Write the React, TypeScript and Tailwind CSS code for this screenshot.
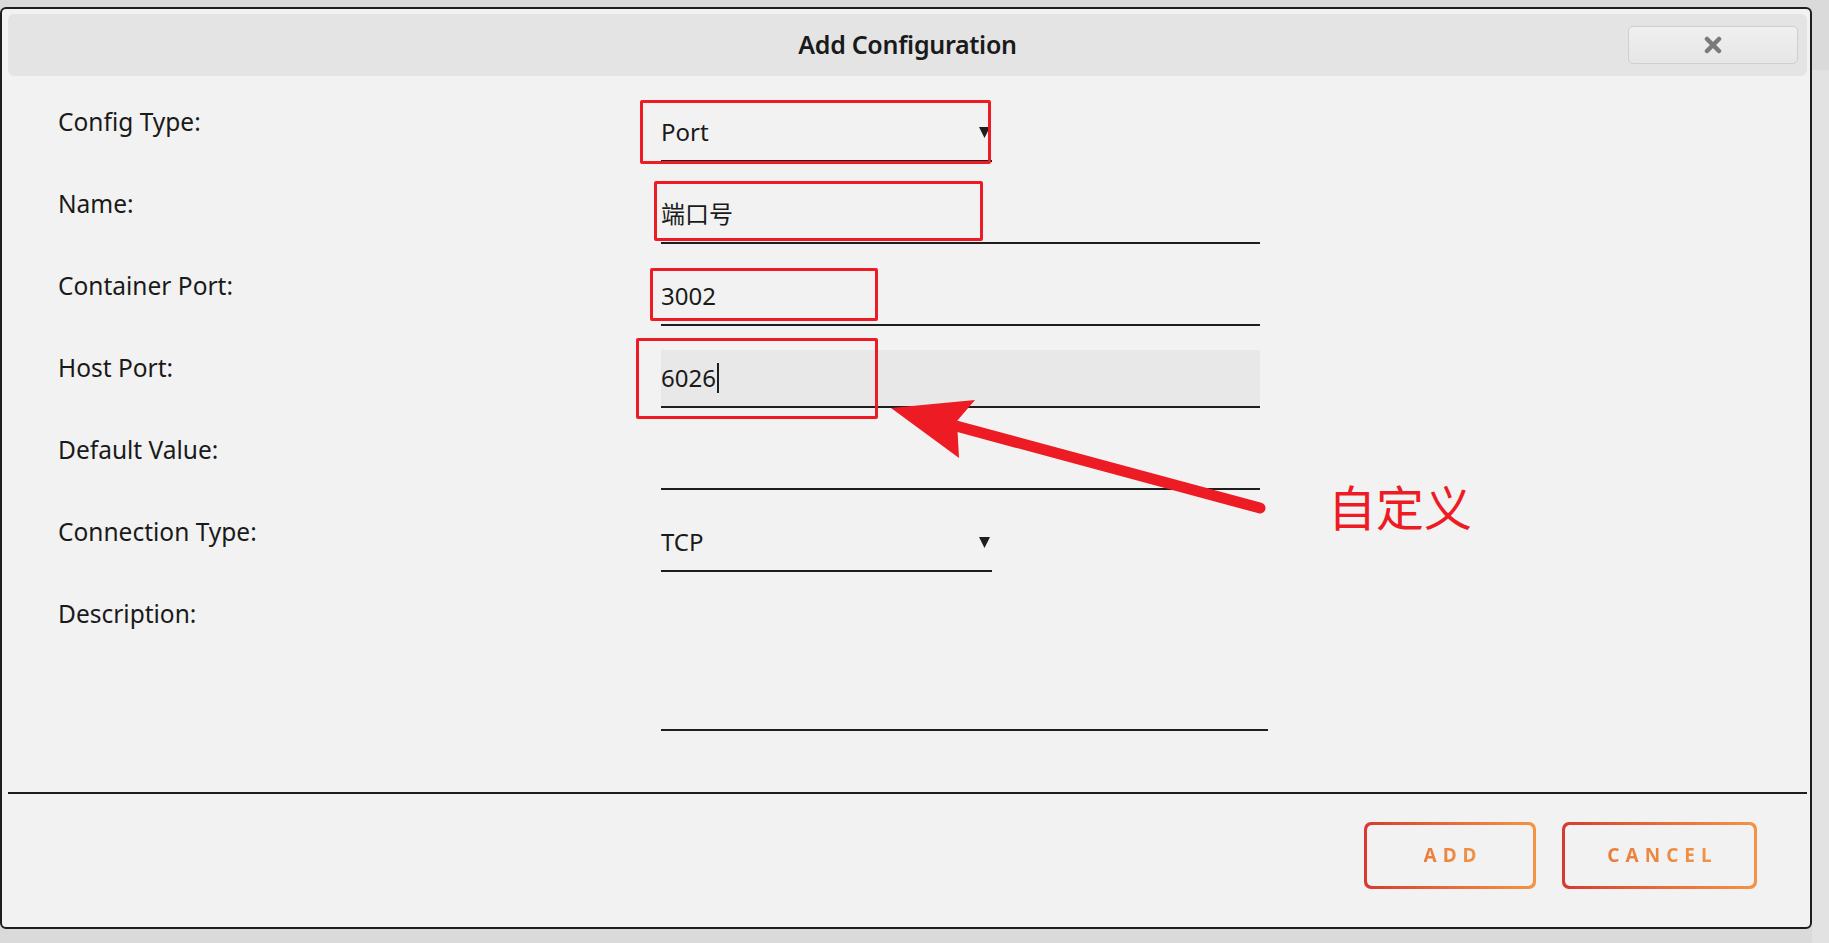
const ink = "#1e1e1e";

function Label({ children }: { children: React.ReactNode }) {
  return (
    <div className="w-[603px] shrink-0 pt-[2px] text-[24.5px] leading-[32px] text-[#1a1a1a]">
      {children}
    </div>
  );
}

function Caret() {
  return (
    <svg width="11" height="12" viewBox="0 0 11 12" className="mr-[2px]">
      <path d="M0 1 L11 1 L5.5 12 Z" fill={ink} />
    </svg>
  );
}

function Field({
  value,
  width = "w-[599px]",
  select = false,
  focused = false,
}: {
  value?: string;
  width?: string;
  select?: boolean;
  focused?: boolean;
}) {
  return (
    <div
      className={`${width} h-[58px] flex items-center justify-between border-b-2 border-[#1e1e1e] ${
        focused ? "bg-[#e8e8e8]" : ""
      }`}
    >
      <span className="flex items-center text-[24px] leading-[32px] text-[#1a1a1a]">
        {value}
        {focused && <span className="ml-[1px] inline-block h-[30px] w-[2px] bg-[#1e1e1e]" />}
      </span>
      {select && <Caret />}
    </div>
  );
}

function OutlineButton({ label, width }: { label: string; width: string }) {
  return (
    <button
      className={`${width} h-[67px] rounded-[7px] bg-linear-to-r from-[#d63a30] to-[#f39445] p-[3px]`}
    >
      <span className="flex h-full w-full items-center justify-center rounded-[5px] bg-[#f2f2f2] pl-[6px]">
        <span className="bg-linear-to-r from-[#e97d3a] to-[#f19448] bg-clip-text text-[19px] font-bold tracking-[6px] text-transparent">
          {label}
        </span>
      </span>
    </button>
  );
}

export default function App() {
  return (
    <div
      className="relative h-[943px] w-full overflow-hidden bg-[#dadada]"
      style={{ fontFamily: '"Noto Sans", "Noto Sans CJK SC", sans-serif' }}
    >
      <div className="absolute right-0 top-[70px] h-[873px] w-[17px] bg-[#e2e2e2]" />

      {/* dialog */}
      <div className="relative mt-[7px] flex h-[922px] w-[1812px] flex-col rounded-[6px] border-2 border-[#1e1e1e] bg-[#f2f2f2]">
        <header className="relative ml-[6px] mr-[3px] mt-[5px] flex h-[62px] items-center justify-center rounded-[6px] bg-[#e4e4e4]">
          <h1 className="text-[25px] font-semibold tracking-[-0.3px] text-[#1a1a1a]">
            Add Configuration
          </h1>
          <button className="absolute right-[9px] top-[12px] flex h-[38px] w-[170px] items-center justify-center rounded-[5px] border border-[#cfcfcf] bg-linear-to-b from-[#f0f0f0] to-[#e6e6e6]">
            <svg width="18" height="18" viewBox="0 0 18 18">
              <path
                d="M3 3 L15 15 M15 3 L3 15"
                stroke="#7a7a7a"
                strokeWidth="4.5"
                strokeLinecap="round"
              />
            </svg>
          </button>
        </header>

        <main className="flex flex-col gap-[24px] pl-[56px] pt-[28px]">
          <div className="flex">
            <Label>Config Type:</Label>
            <Field value="Port" width="w-[331px]" select />
          </div>
          <div className="flex">
            <Label>Name:</Label>
            <Field value="端口号" />
          </div>
          <div className="flex">
            <Label>Container Port:</Label>
            <Field value="3002" />
          </div>
          <div className="flex">
            <Label>Host Port:</Label>
            <Field value="6026" focused />
          </div>
          <div className="flex">
            <Label>Default Value:</Label>
            <Field />
          </div>
          <div className="flex">
            <Label>Connection Type:</Label>
            <Field value="TCP" width="w-[331px]" select />
          </div>
          <div className="flex">
            <Label>Description:</Label>
            <div className="h-[135px] w-[607px] border-b-2 border-[#1e1e1e]" />
          </div>
        </main>

        <div className="ml-[6px] mr-[3px] mt-[61px] h-[2px] bg-[#1e1e1e]" />

        <footer className="mt-[28px] flex justify-end gap-[26px] pr-[53px]">
          <OutlineButton label="ADD" width="w-[172px]" />
          <OutlineButton label="CANCEL" width="w-[195px]" />
        </footer>
      </div>

      {/* annotations */}
      <div className="absolute left-[640px] top-[100px] h-[64px] w-[351px] rounded-[2px] border-[3px] border-[#ed1c24]" />
      <div className="absolute left-[654px] top-[181px] h-[60px] w-[329px] rounded-[2px] border-[3px] border-[#ed1c24]" />
      <div className="absolute left-[650px] top-[268px] h-[53px] w-[228px] rounded-[2px] border-[3px] border-[#ed1c24]" />
      <div className="absolute left-[636px] top-[338px] h-[81px] w-[242px] rounded-[2px] border-[3px] border-[#ed1c24]" />

      <svg className="pointer-events-none absolute left-0 top-0" width="1829" height="943">
        <line
          x1="1260"
          y1="508"
          x2="945"
          y2="423"
          stroke="#ed1c24"
          strokeWidth="11"
          strokeLinecap="round"
        />
        <path d="M891 408 L975 400 L957 421 L959 458 Z" fill="#ed1c24" />
      </svg>

      <div
        className="absolute left-[1328px] top-[476px] text-[48px] leading-[58px] text-[#ed1c24]"
        style={{ fontFamily: '"Noto Sans CJK SC", sans-serif' }}
      >
        自定义
      </div>
    </div>
  );
}
